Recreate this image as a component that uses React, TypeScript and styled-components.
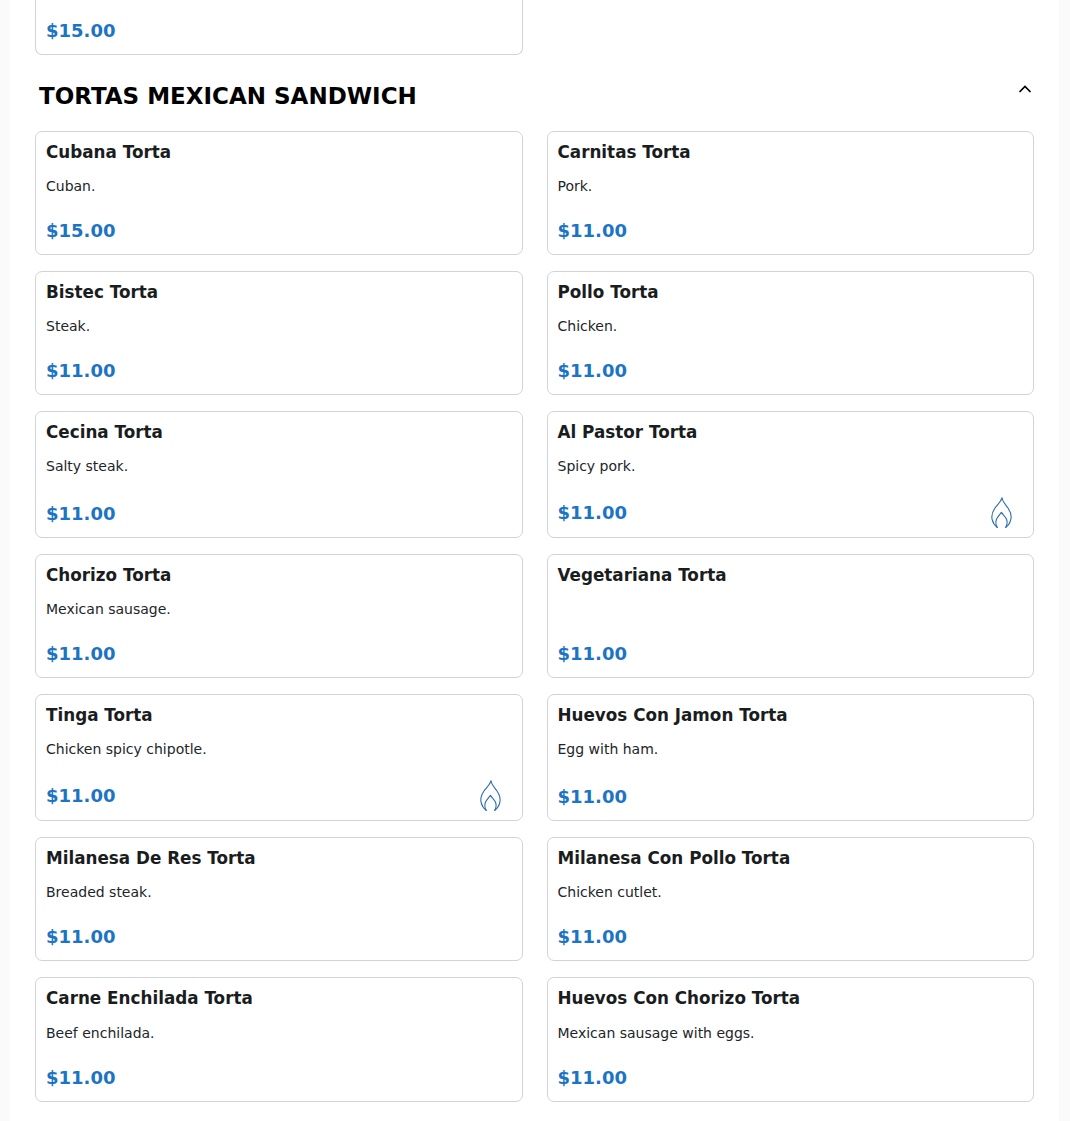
import React from 'react';
import styled, { createGlobalStyle } from 'styled-components';

const Global = createGlobalStyle`
  html, body { margin: 0; padding: 0; background: #fafafa; height: 1121px; overflow: hidden; }
  body { font-family: "DejaVu Sans", sans-serif; }
`;
const Page = styled.main`
  width: 1049px;
  height: 1121px;
  margin-left: 10px;
  background: #fff;
  padding: 0 25px;
  box-sizing: border-box;
  overflow: hidden;
`;
const CutCard = styled.div`
  box-sizing: border-box;
  width: 487.5px;
  height: 55px;
  background: #fff;
  border: 1px solid #ced4da;
  border-top: 0;
  border-radius: 0 0 7px 7px;
  padding: 16px 10px 0;
`;
const SectionHeader = styled.header`
  height: 76.19px;
  display: flex;
  justify-content: space-between;
  align-items: flex-start;
  padding: 23px 1px 0 4px;
  box-sizing: border-box;
`;
const Heading = styled.h2`
  margin: 4px 0 0;
  font-size: 23px;
  line-height: 28px;
  font-weight: 700;
  color: #000;
`;
const Toggle = styled.span`
  display: flex;
  width: 16px;
  height: 16px;
  margin: 3px 0 0;
`;
const Grid = styled.div`
  display: grid;
  grid-template-columns: 1fr 1fr;
  column-gap: 24px;
  row-gap: 16px;
`;
const Title = styled.h3`
  margin: 0;
  font-size: 16.8px;
  line-height: 22px;
  font-weight: 700;
  color: #1a1d20;
`;
const Description = styled.p`
  margin: 12.97px 0 19.01px;
  min-height: 21px;
  font-size: 14px;
  line-height: 21px;
  color: #212529;
`;
const Card = styled.article`
  box-sizing: border-box;
  background: #fff;
  border: 1px solid #ced4da;
  border-radius: 7px;
  padding: 9.15px 10px 7.92px;
  display: flex;
  flex-direction: column;

  &:nth-last-child(-n + 2) ${Description} {
    margin-top: 14px;
  }
`;
const Footer = styled.div`
  margin-top: auto;
  display: flex;
  justify-content: space-between;
  align-items: center;
`;
const Price = styled.span`
  font-size: 18px;
  line-height: 30px;
  font-weight: 700;
  color: #1c74c4;
`;
const HeatIcon = styled.svg`
  width: 33px;
  height: 33px;
  margin-right: 5px;
  flex: none;
`;

const Flame = () => (
  <HeatIcon viewBox="0 0 33 33" fill="none" stroke="#2a6cb0" strokeWidth="1.1" strokeLinejoin="round" strokeLinecap="round">
    <path d="M17 2c.6 3.8 3.6 6.4 6 10 2.4 3.6 3.8 7.4 2.8 11.4-.6 3.2-2.4 6-5 8" />
    <path d="M17 2c-1.2 4-4.6 6.6-7 10-2.5 3.6-3.8 7.4-2.9 11.4.7 3.2 2.5 6 5.1 8" />
    <path d="M12.2 31.4c-1.4-2.4-1.8-5.4-.7-8.2.9-2.3 3-4.2 4.9-6.8 1.9 2.6 4.2 4.5 5.1 6.8 1.1 2.8.6 5.8-.8 8.2" />
  </HeatIcon>
);

const items: { t: string; d: string; p: string; hot?: boolean }[] = [
  { t: 'Cubana Torta', d: 'Cuban.', p: '$15.00' },
  { t: 'Carnitas Torta', d: 'Pork.', p: '$11.00' },
  { t: 'Bistec Torta', d: 'Steak.', p: '$11.00' },
  { t: 'Pollo Torta', d: 'Chicken.', p: '$11.00' },
  { t: 'Cecina Torta', d: 'Salty steak.', p: '$11.00' },
  { t: 'Al Pastor Torta', d: 'Spicy pork.', p: '$11.00', hot: true },
  { t: 'Chorizo Torta', d: 'Mexican sausage.', p: '$11.00' },
  { t: 'Vegetariana Torta', d: '', p: '$11.00' },
  { t: 'Tinga Torta', d: 'Chicken spicy chipotle.', p: '$11.00', hot: true },
  { t: 'Huevos Con Jamon Torta', d: 'Egg with ham.', p: '$11.00' },
  { t: 'Milanesa De Res Torta', d: 'Breaded steak.', p: '$11.00' },
  { t: 'Milanesa Con Pollo Torta', d: 'Chicken cutlet.', p: '$11.00' },
  { t: 'Carne Enchilada Torta', d: 'Beef enchilada.', p: '$11.00' },
  { t: 'Huevos Con Chorizo Torta', d: 'Mexican sausage with eggs.', p: '$11.00' },
];

export default function App() {
  return (
    <>
      <Global />
      <Page>
        <CutCard>
          <Price>$15.00</Price>
        </CutCard>
        <SectionHeader>
          <Heading>TORTAS MEXICAN SANDWICH</Heading>
          <Toggle>
            <svg width="16" height="16" viewBox="0 0 16 16" fill="none" stroke="#000" strokeWidth="1.7">
              <path d="M2.5 11 8 5.5 13.5 11" />
            </svg>
          </Toggle>
        </SectionHeader>
        <Grid>
          {items.map((it) => (
            <Card key={it.t}>
              <Title>{it.t}</Title>
              <Description>{it.d}</Description>
              <Footer>
                <Price>{it.p}</Price>
                {it.hot && <Flame />}
              </Footer>
            </Card>
          ))}
        </Grid>
      </Page>
    </>
  );
}
